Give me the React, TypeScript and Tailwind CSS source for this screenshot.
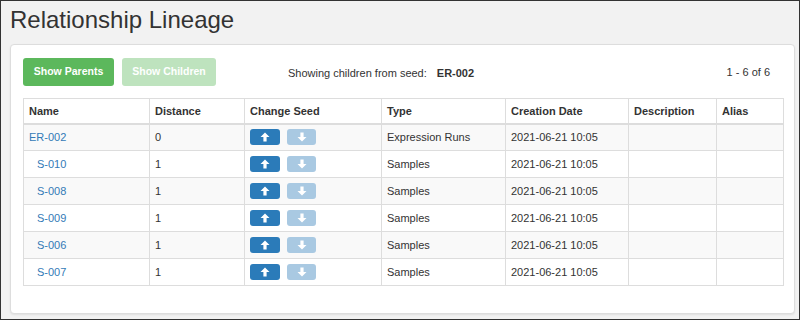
import React from "react";

const rows = [
  { name: "ER-002", dist: "0", type: "Expression Runs", indent: false },
  { name: "S-010", dist: "1", type: "Samples", indent: true },
  { name: "S-008", dist: "1", type: "Samples", indent: true },
  { name: "S-009", dist: "1", type: "Samples", indent: true },
  { name: "S-006", dist: "1", type: "Samples", indent: true },
  { name: "S-007", dist: "1", type: "Samples", indent: true },
];

function Arrow({ up }: { up: boolean }) {
  return (
    <svg width="10" height="10" viewBox="0 0 10 10" className={up ? "" : "rotate-180"}>
      <path d="M5 0.5 L9.5 5 L6.6 5 L6.6 9.5 L3.4 9.5 L3.4 5 L0.5 5 Z" fill="white" />
    </svg>
  );
}

const widths = ["w-[126px]", "w-[95px]", "w-[137px]", "w-[124px]", "w-[123px]", "w-[88px]", "w-[67px]"];
const headers = ["Name", "Distance", "Change Seed", "Type", "Creation Date", "Description", "Alias"];

export default function App() {
  return (
    <div
      className="w-[800px] h-[320px] border border-[#333] bg-[#f2f2f2] text-[#333] overflow-hidden"
      style={{ fontFamily: '"Liberation Sans", Arial, sans-serif' }}
    >
      <div className="pl-[9px] pt-[7px]">
        <div className="text-[24px] leading-[24px] h-[24px]">Relationship Lineage</div>
        <div className="mt-[12px] w-[785px] h-[270px] bg-white border border-[#ddd] rounded-[4px] shadow-[0_1px_2px_rgba(0,0,0,0.08)] px-[12px] pt-[13px]">
          <div className="flex items-center h-[28px]">
            <div className="w-[91px] h-[28px] rounded-[3px] bg-[#5cb85c] text-white text-[10.5px] font-bold flex items-center justify-center">
              Show Parents
            </div>
            <div className="ml-[8px] w-[94px] h-[28px] rounded-[3px] bg-[#bee3be] text-white text-[10.5px] font-bold flex items-center justify-center">
              Show Children
            </div>
            <div className="ml-[72px] text-[11px] pt-[3px] flex">
              <span>Showing children from seed:</span>
              <span className="ml-[10px] font-bold">ER-002</span>
            </div>
            <div className="ml-auto mr-[12px] text-[11px] pt-[1px]">1 - 6 of 6</div>
          </div>
          <table className="mt-[12px] border-collapse text-[11px] w-[760px] table-fixed">
            <thead>
              <tr>
                {headers.map((h, i) => (
                  <th
                    key={h}
                    className={`${widths[i]} h-[25px] p-0 px-[5px] text-left font-bold border border-[#ddd] border-b-2 align-middle leading-[14px]`}
                  >
                    {h}
                  </th>
                ))}
              </tr>
            </thead>
            <tbody>
              {rows.map((r, idx) => (
                <tr key={r.name} className={idx % 2 === 0 ? "bg-[#f9f9f9]" : "bg-white"}>
                  <td className="h-[27px] p-0 px-[5px] border border-[#ddd] leading-[14px]">
                    <span className={`text-[#337ab7] ${r.indent ? "pl-[8px]" : ""}`}>{r.name}</span>
                  </td>
                  <td className="p-0 px-[5px] border border-[#ddd] leading-[14px]">{r.dist}</td>
                  <td className="p-0 px-[5px] border border-[#ddd]">
                    <div className="flex gap-[7px]">
                      <div className="w-[30px] h-[16px] rounded-[3px] bg-[#2b7bb9] flex items-center justify-center">
                        <Arrow up />
                      </div>
                      <div className="w-[29px] h-[16px] rounded-[3px] bg-[#a9c9e2] flex items-center justify-center">
                        <Arrow up={false} />
                      </div>
                    </div>
                  </td>
                  <td className="p-0 px-[5px] border border-[#ddd] leading-[14px]">{r.type}</td>
                  <td className="p-0 px-[5px] border border-[#ddd] leading-[14px]">2021-06-21 10:05</td>
                  <td className="p-0 px-[5px] border border-[#ddd]"></td>
                  <td className="p-0 px-[5px] border border-[#ddd]"></td>
                </tr>
              ))}
            </tbody>
          </table>
        </div>
      </div>
    </div>
  );
}
